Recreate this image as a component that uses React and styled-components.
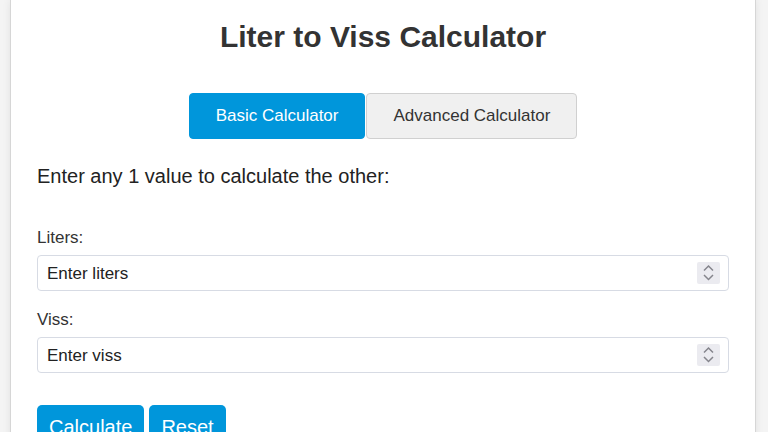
import React from 'react';
import styled, { createGlobalStyle } from 'styled-components';

const GlobalStyle = createGlobalStyle`
  html, body {
    margin: 0;
    padding: 0;
    background: #f4f4f4;
    font-family: "Liberation Sans", Arial, sans-serif;
    color: #222;
  }
`;

const Page = styled.div`
  padding: 0 12px 0 10px;
`;

const Card = styled.div`
  background: #fff;
  border: 1px solid #d6d6d6;
  border-top: none;
  box-shadow: 0 0 8px rgba(0, 0, 0, 0.08);
  padding: 19px 26px 30px;
`;

const Title = styled.h1`
  margin: 0;
  text-align: center;
  font-size: 30px;
  line-height: 36px;
  font-weight: bold;
  color: #333;
`;

const Tabs = styled.div`
  display: flex;
  justify-content: center;
  gap: 1px;
  margin-top: 38px;
`;

const Tab = styled.button`
  font-family: inherit;
  font-size: 17px;
  line-height: 20px;
  padding: 12px 26px;
  border-radius: 4px;
  border: 1px solid ${({ active }) => (active ? '#0096db' : '#d0d0d0')};
  background: ${({ active }) => (active ? '#0096db' : '#f0f0f0')};
  color: ${({ active }) => (active ? '#fff' : '#333')};
  cursor: pointer;
`;

const Intro = styled.p`
  margin: 25px 0 40px;
  font-size: 20px;
  line-height: 24px;
  color: #222;
`;

const Field = styled.div`
  margin-bottom: 19px;
`;

const Label = styled.label`
  display: block;
  font-size: 17px;
  line-height: 20px;
  color: #333;
  margin-bottom: 7px;
`;

const InputBox = styled.div`
  display: flex;
  align-items: center;
  height: 36px;
  box-sizing: border-box;
  border: 1px solid #d7dbe4;
  border-radius: 4px;
  padding: 0 8px 0 9px;
  background: #fff;
`;

const Input = styled.input`
  flex: 1;
  min-width: 0;
  border: none;
  outline: none;
  padding: 2px 0 0;
  font-family: inherit;
  font-size: 17px;
  color: #222;
  background: transparent;

  &::placeholder {
    color: #222;
    opacity: 1;
  }
`;

const Spinner = styled.svg`
  flex: none;
  width: 23px;
  height: 22px;
  background: #ebebf0;
  border-radius: 2px;
`;

const Actions = styled.div`
  display: flex;
  gap: 5px;
  margin-top: 32px;
`;

const ActionButton = styled.button`
  font-family: inherit;
  font-size: 20px;
  line-height: 24px;
  padding: 10px 12px;
  border: none;
  border-radius: 5px;
  background: #0096db;
  color: #fff;
  cursor: pointer;
`;

const SpinIcon = () => (
  <Spinner viewBox="0 0 23 22">
    <path d="M7 8.5 L11.5 4 L16 8.5" fill="none" stroke="#85858c" strokeWidth="1.5" />
    <path d="M7 13 L11.5 17.5 L16 13" fill="none" stroke="#85858c" strokeWidth="1.5" />
  </Spinner>
);

const NumberField = ({ label, placeholder }) => (
  <Field>
    <Label>{label}</Label>
    <InputBox>
      <Input type="text" placeholder={placeholder} />
      <SpinIcon />
    </InputBox>
  </Field>
);

const App = () => (
  <Page>
    <GlobalStyle />
    <Card>
      <Title>Liter to Viss Calculator</Title>
      <Tabs>
        <Tab active>Basic Calculator</Tab>
        <Tab>Advanced Calculator</Tab>
      </Tabs>
      <Intro>Enter any 1 value to calculate the other:</Intro>
      <NumberField label="Liters:" placeholder="Enter liters" />
      <NumberField label="Viss:" placeholder="Enter viss" />
      <Actions>
        <ActionButton>Calculate</ActionButton>
        <ActionButton>Reset</ActionButton>
      </Actions>
    </Card>
  </Page>
);

export default App;
